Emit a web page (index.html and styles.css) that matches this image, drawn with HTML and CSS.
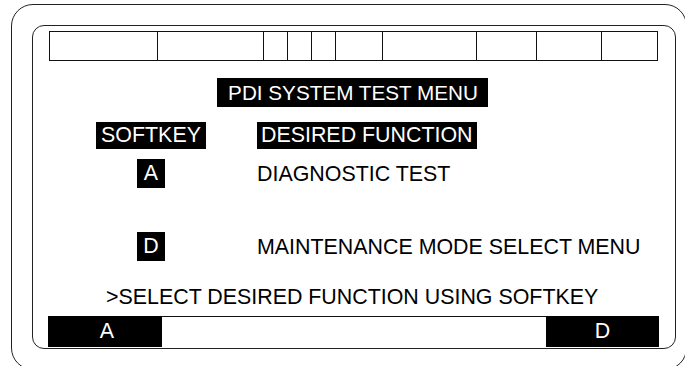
FILE: index.html
```html
<!DOCTYPE html>
<html>
<head>
<meta charset="utf-8">
<link rel="stylesheet" href="styles.css">
</head>
<body>
<div class="outer">
  <div class="screen">
    <div class="cells">
      <div class="c c1"></div><div class="c c2"></div><div class="c c3"></div><div class="c c4"></div><div class="c c5"></div><div class="c c6"></div><div class="c c7"></div><div class="c c8"></div><div class="c c9"></div><div class="c c10"></div>
    </div>
    <div class="title-row"><span class="inv title">PDI SYSTEM TEST MENU</span></div>
    <div class="menu">
      <span class="inv head key-col">SOFTKEY</span>
      <span class="inv head fn-head">DESIRED FUNCTION</span>
      <span class="inv keybox key-col">A</span>
      <span class="fn">DIAGNOSTIC TEST</span>
      <span class="inv keybox key-col row4">D</span>
      <span class="fn row4">MAINTENANCE MODE SELECT MENU</span>
    </div>
    <div class="prompt">&gt;SELECT DESIRED FUNCTION USING SOFTKEY</div>
    <div class="softbar">
      <span class="sk sk-a">A</span>
      <span class="sk-mid"></span>
      <span class="sk sk-d">D</span>
    </div>
  </div>
</div>
</body>
</html>
```

FILE: styles.css
```css
html, body {
  margin: 0;
  padding: 0;
  background: #fff;
}
body {
  width: 685px;
  height: 366px;
  overflow: hidden;
  font-family: "Liberation Sans", Arial, sans-serif;
  font-size: 21.4px;
  color: #000;
}
.outer {
  margin: 4px 0 0 11px;
  width: 676px;
  height: 366px;
  box-sizing: border-box;
  border: 1px solid #222;
  border-radius: 22px;
  padding: 20px;
}
.screen {
  width: 644px;
  height: 324px;
  box-sizing: border-box;
  border: 1px solid #222;
  border-radius: 12px;
  padding: 5px 16px 0 15px;
  display: flex;
  flex-direction: column;
}
.cells {
  margin: 0 1px;
  height: 30px;
  box-sizing: border-box;
  border: 1px solid #111;
  display: grid;
  grid-template-columns: 108px 106px 24px 24px 24px 47px 94px 60px 65px 56px;
}
.c { border-right: 1px solid #111; }
.c10 { border-right: none; }
.inv {
  background: #000;
  color: #fff;
}
.title-row {
  margin-top: 17px;
  display: flex;
  justify-content: center;
  padding-right: 2px;
}
.title {
  font-size: 20.7px;
  line-height: 29px;
  padding: 0 10px 0 11px;
}
.menu {
  margin-top: 15px;
  display: grid;
  grid-template-columns: 112px auto;
  grid-template-rows: 27px 29px 29px;
  column-gap: 50px;
  row-gap: 10px;
  padding-left: 47px;
  align-items: start;
}
.menu .row4 { margin-top: 34px; }
.head {
  line-height: 27px;
  padding: 0 5px;
}
.fn-head {
  justify-self: start;
  padding: 0 4px;
}
.key-col {
  justify-self: center;
  text-align: center;
}
.keybox {
  width: 28px;
  line-height: 29px;
  height: 29px;
}
.fn {
  line-height: 29px;
  padding-top: 1px;
}
.prompt {
  margin-top: 58px;
  line-height: 24px;
  padding-left: 58px;
}
.softbar {
  margin-top: 7px;
  height: 31px;
  display: flex;
}
.sk {
  background: #000;
  color: #fff;
  line-height: 31px;
  text-align: center;
}
.sk-a { width: 114px; padding-left: 4px; box-sizing: border-box; }
.sk-d { width: 113px; }
.sk-mid {
  flex: 1;
  border-top: 1px solid #111;
}
```
